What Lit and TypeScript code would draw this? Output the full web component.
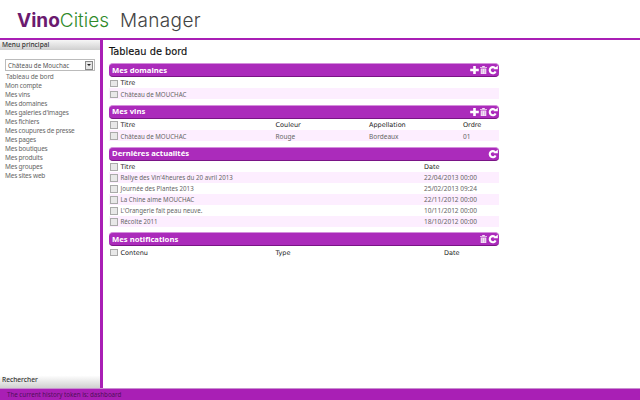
import { LitElement, html, css, svg } from "lit";
import { customElement } from "lit/decorators.js";

const menu = ["Tableau de bord","Mon compte","Mes vins","Mes domaines","Mes galeries d'images","Mes fichiers","Mes coupures de presse","Mes pages","Mes boutiques","Mes produits","Mes groupes","Mes sites web"];
type Panel = { title: string; icons: string[]; cols: string; head: string[]; rows: string[][] };
const panels: Panel[] = [
  { title: "Mes domaines", icons: ["plus","trash","refresh"], cols: "1fr", head: ["Titre"], rows: [["Château de MOUCHAC"]] },
  { title: "Mes vins", icons: ["plus","trash","refresh"], cols: "166.5px 93.5px 94px 1fr", head: ["Titre","Couleur","Appellation","Ordre"], rows: [["Château de MOUCHAC","Rouge","Bordeaux","01"]] },
  { title: "Dernières actualités", icons: ["refresh"], cols: "315px 1fr", head: ["Titre","Date"], rows: [
    ["Rallye des Vin'4heures du 20 avril 2013","22/04/2013 00:00"],
    ["Journée des Plantes 2013","25/02/2013 09:24"],
    ["La Chine aime MOUCHAC","22/11/2012 00:00"],
    ["L'Orangerie fait peau neuve.","10/11/2012 00:00"],
    ["Récolte 2011","18/10/2012 00:00"]] },
  { title: "Mes notifications", icons: ["trash","refresh"], cols: "166.5px 168.5px 1fr", head: ["Contenu","Type","Date"], rows: [] },
];
const icon = (n: string) => {
  if (n === "plus") return svg`<svg class="ic" width="9" height="10" viewBox="0 0 9 10"><path d="M3.2 1h2.6v2.7h3v2.6h-3V9H3.2V6.3h-3V3.7h3z" fill="#fff"/></svg>`;
  if (n === "trash") return svg`<svg class="ic" width="7" height="10" viewBox="0 0 8 10"><path d="M2.5 .5h3v1H8v1H0v-1h2.500zM.8 3.200h6.400V9.500H.8z" fill="#f3e3f5"/><path d="M2.600 4v4.800M5.400 4v4.800" stroke="#c88ad2" stroke-width=".7"/></svg>`;
  return svg`<svg class="ic" width="10" height="10" viewBox="0 0 10 10"><path d="M7.300 3.300A3.100 3.100 0 1 0 7.600 6.600" fill="none" stroke="#fff" stroke-width="2.100"/><path d="M5.500 4.300L9.800 4.300 9.800 .4z" fill="#fff"/></svg>`;
};

@customElement("app-root")
export class AppRoot extends LitElement {
  static styles = css`
    :host { display: flex; flex-direction: column; width: 640px; height: 400px; overflow: hidden; background: #fff;
      font-family: "Noto Sans", sans-serif; font-size: 6.2px; color: #555; }
    .top { flex: none; box-sizing: border-box; border-bottom: 2px solid #a91fb5; height: 40px; padding: 7px 0 0 17px;
      display: flex; align-items: baseline; font-family: "Inter", sans-serif; font-size: 19px; line-height: 27px; }
    .vino { color: #6b1a6f; font-weight: 700; }
    .cities { color: #2f8a2a; font-weight: 300; }
    .mgr { color: #444; font-weight: 300; margin-left: 11px; letter-spacing: .35px; }
    .mid { flex: 1; display: flex; min-height: 0; }
    .side { width: 100px; flex: none; display: flex; flex-direction: column; border-right: 3px solid #a91fb5; }
    .sh { height: 10px; line-height: 10px; padding-left: 2px; font-size: 6.600px; font-weight: 500; color: #333; background: linear-gradient(#f6f6f6, #cfcfcf); }
    .sh.bottom { height: 14px; line-height: 11px; background: linear-gradient(#fff 10%, #d0d0d0); }
    .sel { margin: 9px 0 1px 5px; width: 90px; height: 12px; box-sizing: border-box; border: 1px solid #bbb; display: flex; align-items: center; justify-content: space-between; padding-left: 2px; color: #555; }
    .arrow { width: 6px; height: 7px; margin-right: 1px; border: 1px solid #888; background: #e4e4e4; position: relative; }
    .arrow::after { content: ""; position: absolute; left: 1px; top: 2.500px; border: 2px solid transparent; border-top: 2.500px solid #222; border-bottom: 0; }
    .menu { flex: 1; padding-left: 5px; font-size: 6.500px; letter-spacing: -.2px; }
    .menu div { height: 9px; line-height: 9px; color: #666; white-space: nowrap; }
    .menu div:first-child { margin-left: 1px; letter-spacing: -.1px; }
    .foot { background: #a91fb5; height: 12px; flex: none; box-sizing: border-box; border-top: 1px solid #c98fd0; padding-left: 7px; line-height: 11px; color: #50105a; font-size: 6.200px; }
    .main { flex: 1; padding: 6px 0 0 6px; min-width: 0; }
    h1 { margin: 0 0 5px 0; font-family: "DejaVu Sans", sans-serif; font-size: 9.800px; line-height: 12px; font-weight: 400; color: #111; -webkit-text-stroke: .15px #111; }
    .panel { width: 390px; margin-bottom: 5.800px; }
    .bar { height: 14px; box-sizing: border-box; background: #ab2bbb; border-top: 1px solid #d48fdc; border-bottom: 1px solid #7a1486; border-radius: 4px; display: flex; align-items: center; justify-content: space-between; padding: 0 1px 0 3px; }
    .bar b { color: #fff; font-size: 7.700px; font-weight: 700; line-height: 11px; }
    .icons { display: flex; align-items: center; gap: 1px; }
    .ic { display: block; }
    .row { display: grid; height: 11px; box-sizing: border-box; padding-top: 1.500px; align-items: center; font-size: 6.500px; color: #666; }
    .row.head { color: #222; font-family: "DejaVu Sans", sans-serif; }
    .row:not(.head) .cellbox { font-size: 6.200px; }
    .row:not(.head):nth-child(even) { background: #fdeeff; }
    .row > span { white-space: nowrap; }
    .cellbox { display: flex; align-items: center; gap: 3px; padding-left: 1px; }
    .cb { width: 5.500px; height: 5.500px; border: 1px solid #aaa; background: #e8e8e8; flex: none; }
  `;
  render() {
    return html`
      <div class="top"><span class="vino">Vino</span><span class="cities">Cities</span><span class="mgr">Manager</span></div>
      <div class="mid">
        <div class="side">
          <div class="sh">Menu principal</div>
          <div class="sel"><span>Château de Mouchac</span><span class="arrow"></span></div>
          <div class="menu">${menu.map((m) => html`<div>${m}</div>`)}</div>
          <div class="sh bottom">Rechercher</div>
        </div>
        <div class="main">
          <h1>Tableau de bord</h1>
          ${panels.map((p) => html`
            <div class="panel">
              <div class="bar"><b>${p.title}</b><span class="icons">${p.icons.map(icon)}</span></div>
              <div class="rows">
                ${[p.head, ...p.rows].map((r, i) => html`
                  <div class="row ${i === 0 ? "head" : ""}" style="grid-template-columns:${p.cols}">
                    ${r.map((c, j) => j === 0 ? html`<span class="cellbox"><span class="cb"></span>${c}</span>` : html`<span>${c}</span>`)}
                  </div>`)}
              </div>
            </div>`)}
        </div>
      </div>
      <div class="foot">The current history token is: dashboard</div>
    `;
  }
}
